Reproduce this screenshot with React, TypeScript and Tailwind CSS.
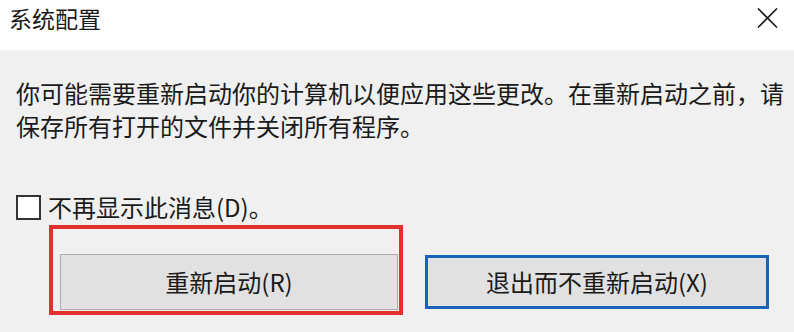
export default function App() {
  return (
    <div className="w-[794px] h-[332px] flex flex-col bg-[#f0f0f0] text-[#1a1a1a] overflow-hidden font-['Noto_Sans_CJK_SC',sans-serif]">
      {/* title bar */}
      <div className="h-[50px] shrink-0 bg-white flex justify-between pl-[9px] pr-[16px]">
        <span className="text-[23px] leading-[37px]">系统配置</span>
        <svg
          className="mt-[8px]"
          width="21"
          height="20"
          viewBox="0 0 21 20"
          fill="none"
          stroke="#1a1a1a"
          strokeWidth="1.6"
        >
          <path d="M1 0.5 L20 19.5 M20 0.5 L1 19.5" />
        </svg>
      </div>

      {/* message */}
      <div className="pl-[16px] pt-[26px] text-[24px] leading-[33px] whitespace-nowrap">
        你可能需要重新启动你的计算机以便应用这些更改。在重新启动之前，请
        <br />
        保存所有打开的文件并关闭所有程序。
      </div>

      {/* checkbox */}
      <label className="mt-[53px] pl-[16px] flex items-center gap-[7px] h-[25px]">
        <span className="w-[25px] h-[25px] border-2 border-[#333] bg-white" />
        <span className="text-[24px] leading-[25px] -mt-[2px]">不再显示此消息(D)。</span>
      </label>

      {/* buttons */}
      <div className="mt-[5px] pl-[49px] flex items-end gap-[22px]">
        <div className="w-[354px] h-[90px] border-4 border-[#e2302f] pt-[25px] pl-[7px] pr-[1px] pb-[1px]">
          <button className="w-full h-full bg-[#e1e1e1] border border-[#adadad] text-[24px] leading-none">
            重新启动(R)
          </button>
        </div>
        <button className="w-[344px] h-[54px] mb-[6px] border-[3px] border-[#1763b8] bg-[#e1e1e1] text-[24px] leading-none">
          退出而不重新启动(X)
        </button>
      </div>
    </div>
  );
}
